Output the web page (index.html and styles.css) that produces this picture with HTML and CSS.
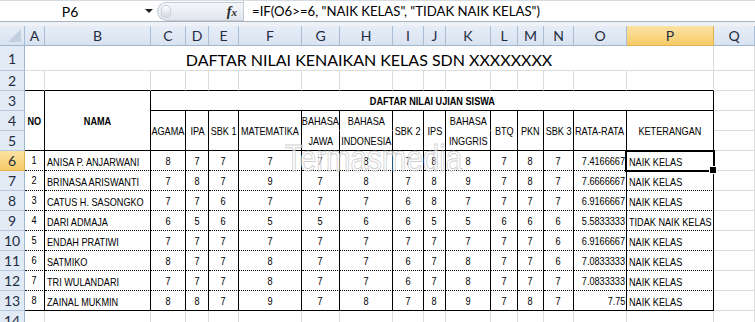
FILE: index.html
```html
<!DOCTYPE html>
<html>
<head>
<meta charset="utf-8">
<link rel="stylesheet" href="styles.css">
</head>
<body>
<div class="app">
  <div class="fbar">
    <div class="namebox"><span class="ref">P6</span><span class="dd"></span></div>
    <div class="fxzone"><span class="knob"></span><span class="fx">f<i>x</i></span></div>
    <div class="formula">=IF(O6&gt;=6, "NAIK KELAS", "TIDAK NAIK KELAS")</div>
  </div>
  <div class="gap"></div>
  <div class="sheet">
    <div class="ch corner"><span class="tri"></span></div>
    <div class="ch">A</div><div class="ch">B</div><div class="ch">C</div><div class="ch">D</div><div class="ch">E</div><div class="ch">F</div><div class="ch">G</div><div class="ch">H</div><div class="ch">I</div><div class="ch">J</div><div class="ch">K</div><div class="ch">L</div><div class="ch">M</div><div class="ch">N</div><div class="ch">O</div><div class="ch sel">P</div><div class="ch">Q</div>

    <div class="rh">1</div><div class="c title span16">DAFTAR NILAI KENAIKAN KELAS SDN XXXXXXXX</div><div class="c"></div>

    <div class="rh">2</div>
    <div class="c kb"></div><div class="c kb"></div><div class="c kb"></div><div class="c kb"></div><div class="c kb"></div><div class="c kb"></div><div class="c kb"></div><div class="c kb"></div><div class="c kb"></div><div class="c kb"></div><div class="c kb"></div><div class="c kb"></div><div class="c kb"></div><div class="c kb"></div><div class="c kb"></div><div class="c kb"></div><div class="c"></div>

    <div class="rh">3</div>
    <div class="c t k kb b ctr rs3"><span>NO</span></div>
    <div class="c t k kb b ctr rs3"><span>NAMA</span></div>
    <div class="c t k kb b ctr span14"><span>DAFTAR NILAI UJIAN SISWA</span></div>
    <div class="c"></div>

    <div class="rh">4</div>
    <div class="c t k kb ctr rs2"><span>AGAMA</span></div>
    <div class="c t k kb ctr rs2"><span>IPA</span></div>
    <div class="c t k kb ctr rs2"><span>SBK 1</span></div>
    <div class="c t k kb ctr rs2"><span>MATEMATIKA</span></div>
    <div class="c t k nb ctr"><span>BAHASA</span></div>
    <div class="c t k nb ctr"><span>BAHASA</span></div>
    <div class="c t k kb ctr rs2"><span>SBK 2</span></div>
    <div class="c t k kb ctr rs2"><span>IPS</span></div>
    <div class="c t k nb ctr"><span>BAHASA</span></div>
    <div class="c t k kb ctr rs2"><span>BTQ</span></div>
    <div class="c t k kb ctr rs2"><span>PKN</span></div>
    <div class="c t k kb ctr rs2"><span>SBK 3</span></div>
    <div class="c t k kb ctr rs2"><span>RATA-RATA</span></div>
    <div class="c t k kb ctr rs2"><span>KETERANGAN</span></div>
    <div class="c"></div>

    <div class="rh">5</div>
    <div class="c t k kb ctr"><span>JAWA</span></div>
    <div class="c t k kb ctr"><span>INDONESIA</span></div>
    <div class="c t k kb ctr"><span>INGGRIS</span></div>
    <div class="c"></div>

    <div class="rh sel">6</div>
    <div class="c t k kd ctr up"><span>1</span></div><div class="c t k kd nm"><span>ANISA P. ANJARWANI</span></div>
    <div class="c t k kd ctr"><span>8</span></div><div class="c t k kd ctr"><span>7</span></div><div class="c t k kd ctr"><span>7</span></div><div class="c t k kd ctr"><span>7</span></div><div class="c t k kd ctr"><span>7</span></div><div class="c t k kd ctr"><span>8</span></div><div class="c t k kd ctr"><span>7</span></div><div class="c t k kd ctr"><span>8</span></div><div class="c t k kd ctr"><span>8</span></div><div class="c t k kd ctr"><span>7</span></div><div class="c t k kd ctr"><span>8</span></div><div class="c t k kd ctr"><span>7</span></div>
    <div class="c t k kd rt"><span>7.4166667</span></div><div class="c t k kd nm cur"><span>NAIK KELAS</span></div>
    <div class="c"></div>

    <div class="rh">7</div>
    <div class="c t k kd ctr up"><span>2</span></div><div class="c t k kd nm"><span>BRINASA ARISWANTI</span></div>
    <div class="c t k kd ctr"><span>7</span></div><div class="c t k kd ctr"><span>8</span></div><div class="c t k kd ctr"><span>7</span></div><div class="c t k kd ctr"><span>9</span></div><div class="c t k kd ctr"><span>7</span></div><div class="c t k kd ctr"><span>8</span></div><div class="c t k kd ctr"><span>7</span></div><div class="c t k kd ctr"><span>8</span></div><div class="c t k kd ctr"><span>9</span></div><div class="c t k kd ctr"><span>7</span></div><div class="c t k kd ctr"><span>8</span></div><div class="c t k kd ctr"><span>7</span></div>
    <div class="c t k kd rt"><span>7.6666667</span></div><div class="c t k kd nm"><span>NAIK KELAS</span></div>
    <div class="c"></div>

    <div class="rh">8</div>
    <div class="c t k kd ctr up"><span>3</span></div><div class="c t k kd nm"><span>CATUS H. SASONGKO</span></div>
    <div class="c t k kd ctr"><span>7</span></div><div class="c t k kd ctr"><span>7</span></div><div class="c t k kd ctr"><span>6</span></div><div class="c t k kd ctr"><span>7</span></div><div class="c t k kd ctr"><span>7</span></div><div class="c t k kd ctr"><span>7</span></div><div class="c t k kd ctr"><span>6</span></div><div class="c t k kd ctr"><span>8</span></div><div class="c t k kd ctr"><span>7</span></div><div class="c t k kd ctr"><span>7</span></div><div class="c t k kd ctr"><span>7</span></div><div class="c t k kd ctr"><span>7</span></div>
    <div class="c t k kd rt"><span>6.9166667</span></div><div class="c t k kd nm"><span>NAIK KELAS</span></div>
    <div class="c"></div>

    <div class="rh">9</div>
    <div class="c t k kd ctr up"><span>4</span></div><div class="c t k kd nm"><span>DARI ADMAJA</span></div>
    <div class="c t k kd ctr"><span>6</span></div><div class="c t k kd ctr"><span>5</span></div><div class="c t k kd ctr"><span>6</span></div><div class="c t k kd ctr"><span>5</span></div><div class="c t k kd ctr"><span>5</span></div><div class="c t k kd ctr"><span>6</span></div><div class="c t k kd ctr"><span>6</span></div><div class="c t k kd ctr"><span>5</span></div><div class="c t k kd ctr"><span>5</span></div><div class="c t k kd ctr"><span>6</span></div><div class="c t k kd ctr"><span>6</span></div><div class="c t k kd ctr"><span>6</span></div>
    <div class="c t k kd rt"><span>5.5833333</span></div><div class="c t k kd nm"><span>TIDAK NAIK KELAS</span></div>
    <div class="c"></div>

    <div class="rh">10</div>
    <div class="c t k kd ctr up"><span>5</span></div><div class="c t k kd nm"><span>ENDAH PRATIWI</span></div>
    <div class="c t k kd ctr"><span>7</span></div><div class="c t k kd ctr"><span>7</span></div><div class="c t k kd ctr"><span>7</span></div><div class="c t k kd ctr"><span>7</span></div><div class="c t k kd ctr"><span>7</span></div><div class="c t k kd ctr"><span>7</span></div><div class="c t k kd ctr"><span>7</span></div><div class="c t k kd ctr"><span>7</span></div><div class="c t k kd ctr"><span>7</span></div><div class="c t k kd ctr"><span>7</span></div><div class="c t k kd ctr"><span>7</span></div><div class="c t k kd ctr"><span>6</span></div>
    <div class="c t k kd rt"><span>6.9166667</span></div><div class="c t k kd nm"><span>NAIK KELAS</span></div>
    <div class="c"></div>

    <div class="rh">11</div>
    <div class="c t k kd ctr up"><span>6</span></div><div class="c t k kd nm"><span>SATMIKO</span></div>
    <div class="c t k kd ctr"><span>8</span></div><div class="c t k kd ctr"><span>7</span></div><div class="c t k kd ctr"><span>7</span></div><div class="c t k kd ctr"><span>8</span></div><div class="c t k kd ctr"><span>7</span></div><div class="c t k kd ctr"><span>7</span></div><div class="c t k kd ctr"><span>6</span></div><div class="c t k kd ctr"><span>7</span></div><div class="c t k kd ctr"><span>8</span></div><div class="c t k kd ctr"><span>7</span></div><div class="c t k kd ctr"><span>7</span></div><div class="c t k kd ctr"><span>6</span></div>
    <div class="c t k kd rt"><span>7.0833333</span></div><div class="c t k kd nm"><span>NAIK KELAS</span></div>
    <div class="c"></div>

    <div class="rh">12</div>
    <div class="c t k kd ctr up"><span>7</span></div><div class="c t k kd nm"><span>TRI WULANDARI</span></div>
    <div class="c t k kd ctr"><span>7</span></div><div class="c t k kd ctr"><span>7</span></div><div class="c t k kd ctr"><span>7</span></div><div class="c t k kd ctr"><span>8</span></div><div class="c t k kd ctr"><span>7</span></div><div class="c t k kd ctr"><span>7</span></div><div class="c t k kd ctr"><span>6</span></div><div class="c t k kd ctr"><span>7</span></div><div class="c t k kd ctr"><span>8</span></div><div class="c t k kd ctr"><span>7</span></div><div class="c t k kd ctr"><span>7</span></div><div class="c t k kd ctr"><span>7</span></div>
    <div class="c t k kd rt"><span>7.0833333</span></div><div class="c t k kd nm"><span>NAIK KELAS</span></div>
    <div class="c"></div>

    <div class="rh">13</div>
    <div class="c t k kb ctr up"><span>8</span></div><div class="c t k kb nm"><span>ZAINAL MUKMIN</span></div>
    <div class="c t k kb ctr"><span>8</span></div><div class="c t k kb ctr"><span>8</span></div><div class="c t k kb ctr"><span>7</span></div><div class="c t k kb ctr"><span>9</span></div><div class="c t k kb ctr"><span>7</span></div><div class="c t k kb ctr"><span>8</span></div><div class="c t k kb ctr"><span>7</span></div><div class="c t k kb ctr"><span>8</span></div><div class="c t k kb ctr"><span>9</span></div><div class="c t k kb ctr"><span>7</span></div><div class="c t k kb ctr"><span>8</span></div><div class="c t k kb ctr"><span>7</span></div>
    <div class="c t k kb rt"><span>7.75</span></div><div class="c t k kb nm"><span>NAIK KELAS</span></div>
    <div class="c"></div>

    <div class="rh">14</div>
    <div class="c"></div><div class="c"></div><div class="c"></div><div class="c"></div><div class="c"></div><div class="c"></div><div class="c"></div><div class="c"></div><div class="c"></div><div class="c"></div><div class="c"></div><div class="c"></div><div class="c"></div><div class="c"></div><div class="c"></div><div class="c"></div><div class="c"></div>

    <div class="watermark">Termasmedia</div>
  </div>
</div>
</body>
</html>
```
FILE: styles.css
```css
* { box-sizing: border-box; }
html, body { margin: 0; padding: 0; background: #fff; }
body { width: 755px; height: 322px; overflow: hidden; }

.app { width: 755px; }

/* formula bar */
.fbar {
  display: flex;
  height: 22px;
  border-top: 1px solid #d5dbe3;
  border-bottom: 1px solid #a9b3bf;
  background: #fff;
  font-family: "Lato", "Liberation Sans", sans-serif;
  font-size: 14px;
  color: #000;
}
.namebox {
  width: 157px;
  display: flex;
  align-items: center;
  background: #fff;
}
.ref { width: 140px; text-align: center; }
.dd {
  width: 0; height: 0;
  border-left: 4px solid transparent;
  border-right: 4px solid transparent;
  border-top: 4px solid #222;
  margin-left: 5px;
}
.fxzone {
  width: 86px;
  margin-top: 1px;
  height: 19px;
  border: 1px solid #c3cbd6;
  border-right: none;
  border-radius: 10px 0 0 10px;
  background: linear-gradient(#f4f6f9, #e1e6ed);
  display: flex;
  align-items: center;
  justify-content: space-between;
  padding: 0 6px 0 3px;
}
.knob {
  width: 10px; height: 13px;
  border-radius: 6px;
  background: linear-gradient(#ffffff, #d3d9e1);
  border: 1px solid #c9d0da;
}
.fx {
  font-family: "Liberation Serif", serif;
  font-style: italic;
  font-weight: bold;
  font-size: 14px;
  color: #2a2a2a;
}
.fx i { font-size: 11px; }
.formula {
  flex: 1;
  border-left: 1px solid #c3cbd6;
  padding-left: 8px;
  display: flex;
  align-items: center;
  white-space: nowrap;
  font-size: 13.2px;
}
.gap { height: 4px; background: #eef1f5; }

/* sheet */
.sheet {
  position: relative;
  display: grid;
  grid-template-columns: 25px 20px 106px 35px 23px 30px 63px 38px 53px 31px 22px 45px 27px 26px 30px 53px 87px 41px;
  grid-template-rows: 20px 25px repeat(13, 20px);
  font-family: "Liberation Sans", Arial, sans-serif;
  font-size: 11px;
  color: #000;
}
.ch, .rh {
  font-family: "Lato", "Liberation Sans", sans-serif;
  font-size: 14px;
  color: #1f2d42;
  background: linear-gradient(#e6edf7, #d9e3f0);
  border-right: 1px solid #a8bcd3;
  border-bottom: 1px solid #9eb6ce;
  display: flex;
  align-items: center;
  justify-content: center;
}
.rh { background: #e2eaf5; border-bottom-color: #b8c9dd; border-right-color: #9eb6ce; }
.ch.sel, .rh.sel {
  background: linear-gradient(#fbe3a4, #f6cb67);
  border-right-color: #e2b152;
  border-bottom-color: #e2b152;
}
.corner { position: relative; }
.tri {
  position: absolute; right: 3px; bottom: 3px;
  width: 0; height: 0;
  border-left: 13px solid transparent;
  border-bottom: 13px solid #c2cfdf;
}

.c {
  border-right: 1px solid #dadcdd;
  border-bottom: 1px solid #dadcdd;
  display: flex;
  align-items: center;
  white-space: nowrap;
  overflow: hidden;
  min-width: 0;
}
/* Arial Narrow look: Arial horizontally condensed */
.c > span {
  display: inline-block;
  flex: none;
  transform: scaleX(0.83);
}
.ctr > span { transform-origin: center; }
.nm > span { transform-origin: left center; }
.rt > span { transform-origin: right center; }

.t { background: #fff; }
.k { border-right-color: #000; }
.kb { border-bottom: 1px solid #000; }
.kd { border-bottom: 1px dotted #000; }
.nb { border-bottom-color: #fff; }
.b { font-weight: bold; }
.ctr { justify-content: center; }
.rt { justify-content: flex-end; padding-right: 1px; }
.nm { justify-content: flex-start; padding-left: 2px; padding-top: 2px; }
.up { padding-bottom: 2px; }

.span16 { grid-column: span 16; }
.span14 { grid-column: span 14; }
.rs3 { grid-row: span 3; }
.rs2 { grid-row: span 2; }

.title {
  justify-content: center;
  font-family: "Lato", "Liberation Sans", sans-serif;
  font-size: 16px;
  padding-top: 3px;
}

.cur { position: relative; overflow: visible; z-index: 2; }
.cur::after {
  content: "";
  position: absolute;
  left: -2px; top: -1px; right: -2px; bottom: -2px;
  border: 2px solid #000;
}
.cur::before {
  content: "";
  position: absolute;
  right: -4px; bottom: -4px;
  width: 6px; height: 6px;
  background: #000;
  border: 1px solid #fff;
  z-index: 3;
}

.watermark {
  position: absolute;
  left: 285px;
  top: 112px;
  font-family: "Liberation Sans", sans-serif;
  font-size: 36px;
  transform: scaleX(0.82);
  transform-origin: left top;
  color: rgba(255, 255, 255, 0.6);
  -webkit-text-stroke: 1px rgba(175, 175, 175, 0.6);
  pointer-events: none;
  z-index: 4;
}
```
